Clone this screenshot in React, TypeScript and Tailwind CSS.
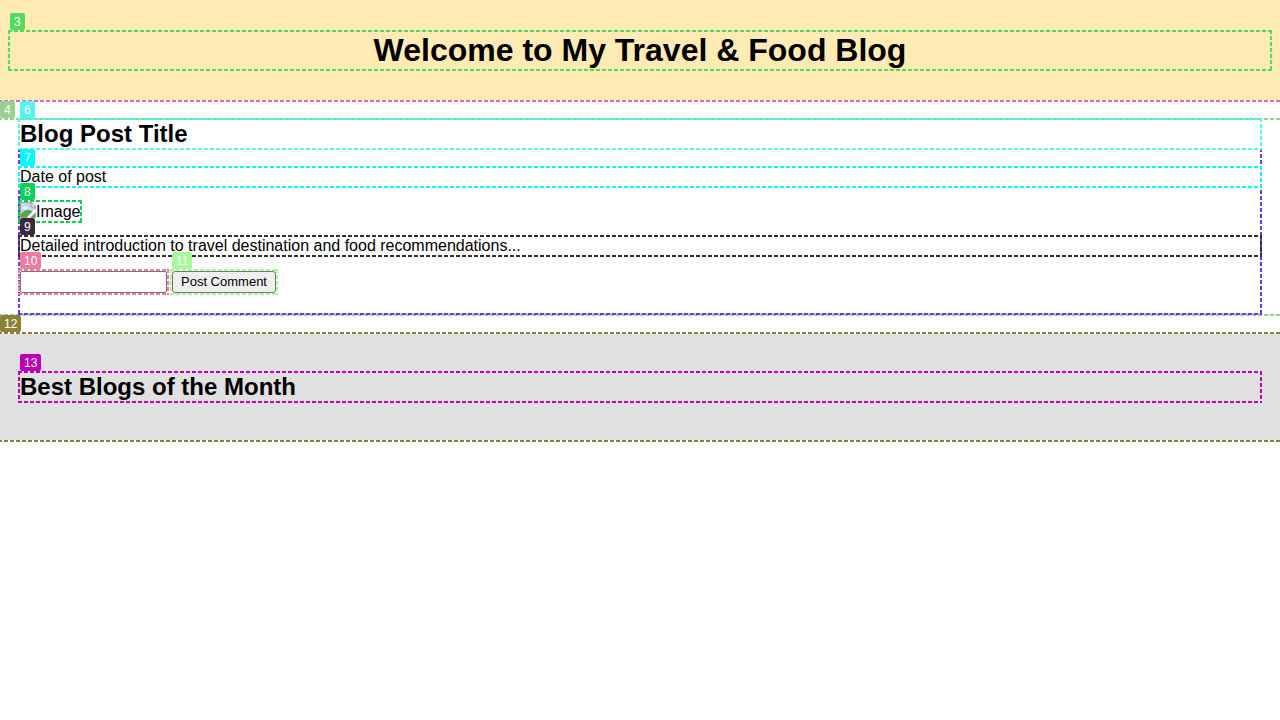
import type { ReactNode } from "react";

type TagProps = { n: number; color: string };

function Tag({ n, color }: TagProps) {
  return (
    <span
      className={`absolute bottom-full left-0 mb-0.5 h-[17px] rounded-xs px-1 text-xs leading-[18px] font-medium text-white ${color}`}
    >
      {n}
    </span>
  );
}

function Dashes({ color }: { color: string }) {
  return (
    <span
      aria-hidden="true"
      className={`pointer-events-none absolute -inset-0.5 bg-[image:repeating-linear-gradient(90deg,currentColor_0_4px,transparent_4px_6px),repeating-linear-gradient(90deg,currentColor_0_4px,transparent_4px_6px),repeating-linear-gradient(180deg,currentColor_0_4px,transparent_4px_6px),repeating-linear-gradient(180deg,currentColor_0_4px,transparent_4px_6px)] bg-[position:top,bottom,left,right] bg-[size:100%_2px,100%_2px,2px_100%,2px_100%] bg-no-repeat ${color}`}
    />
  );
}

type MarkedProps = { n: number; color: string; line: string; className?: string; children: ReactNode };

function Marked({ n, color, line, className = "", children }: MarkedProps) {
  return (
    <div className={`relative ${className}`}>
      {children}
      <Dashes color={line} />
      <Tag n={n} color={color} />
    </div>
  );
}

function BrokenImageIcon() {
  return (
    <svg width="16" height="16" viewBox="0 0 16 16" aria-hidden="true">
      <path d="M.5 .5H11L15.5 5V15.5H.5Z" fill="#fff" stroke="#a0a0a0" />
      <path d="M1 1H10.5V5.5H15V7L7 15H1Z" fill="#c3d5f5" />
      <path d="M2.500 6.500C2.500 5 4.500 4 5.500 5C6.800 4.500 7.800 5.500 7.500 7H2.500Z" fill="#fff" />
      <path d="M1 15V12C3 9 7 7 10.500 8.500L12.500 9.500L7 15Z" fill="#57a844" />
      <path d="M11 .5V5H15.5Z" fill="#fff" stroke="#8c8c8c" />
      <path d="M7 16L16 7V10L10 16Z" fill="#fff" />
      <path d="M11 15H15V11Z" fill="#57a844" />
    </svg>
  );
}

export default function App() {
  return (
    <div className="overflow-x-clip bg-white pb-5 font-['Liberation_Sans',Arial,sans-serif] text-base leading-[18px] text-black">
      <header className="relative bg-[#ffebb3] px-2.5 pt-8 pb-[31px] text-center">
        <Dashes color="text-[#e663b0]" />
        <Marked n={3} color="bg-[#50dc58]" line="text-[#50dc58]">
          <h1 className="text-[32px] leading-[37px] font-bold">Welcome to My Travel &amp; Food Blog</h1>
        </Marked>
      </header>

      <main className="relative mt-5 px-5">
        <Dashes color="text-[#98d08f]" />
        <Tag n={4} color="bg-[#98d08f]" />
        <article className="relative border-b border-[#cccccc] pb-5">
          <Dashes color="text-[#6b38f5]" />
          <Marked n={6} color="bg-[#52f5f0]" line="text-[#52f5f0]">
            <h2 className="text-2xl leading-7 font-bold">Blog Post Title</h2>
          </Marked>
          <Marked n={7} color="bg-[#06f8fb]" line="text-[#06f8fb]" className="mt-5">
            <p>Date of post</p>
          </Marked>
          <Marked n={8} color="bg-[#05d257]" line="text-[#05d257]" className="mt-4 w-fit">
            <div role="img" aria-label="Image" className="flex h-[19px] items-start">
              <BrokenImageIcon />
              <span className="leading-5">Image</span>
            </div>
          </Marked>
          <Marked n={9} color="bg-[#3b293c]" line="text-[#3b293c]" className="mt-4">
            <p>Detailed introduction to travel destination and food recommendations...</p>
          </Marked>
          <form className="mt-4 flex gap-[5px]" onSubmit={(event) => event.preventDefault()}>
            <Marked n={10} color="bg-[#ee7aa2]" line="text-[#ee7aa2]">
              <input
                type="text"
                aria-label="Comment"
                className="block h-[22px] w-[147px] rounded-xs border border-[#767676] bg-white px-px text-[13px]"
              />
            </Marked>
            <Marked n={11} color="bg-[#a8f79c]" line="text-[#a8f79c]">
              <button
                type="submit"
                className="block h-[22px] rounded-[3px] border border-[#767676] bg-[#efefef] px-2 text-[13px] leading-5"
              >
                Post Comment
              </button>
            </Marked>
          </form>
        </article>
      </main>

      <footer className="relative mt-5 bg-[#e0e0e0] px-5 py-[39px]">
        <Dashes color="text-[#8b8136]" />
        <Tag n={12} color="bg-[#8b8136]" />
        <Marked n={13} color="bg-[#bc00b8]" line="text-[#bc00b8]">
          <h2 className="text-2xl leading-7 font-bold">Best Blogs of the Month</h2>
        </Marked>
      </footer>
    </div>
  );
}
